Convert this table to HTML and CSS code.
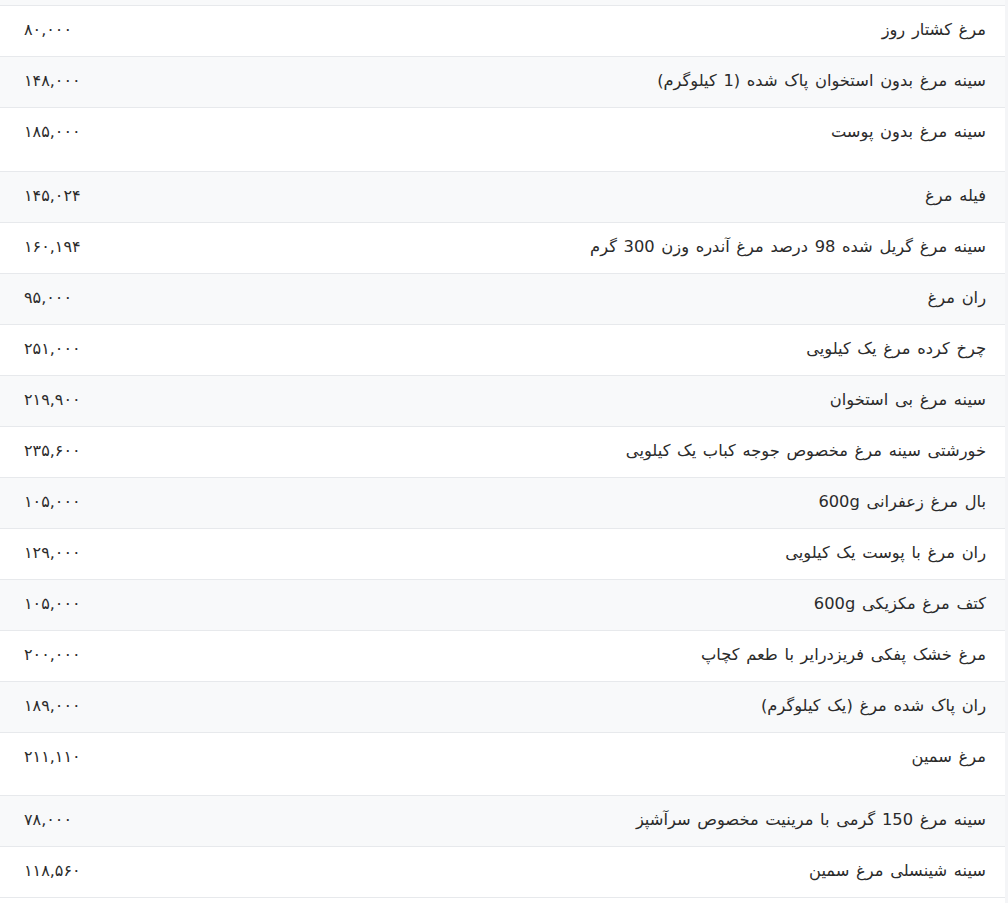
FILE: index.html
```html
<!DOCTYPE html>
<html lang="fa" dir="rtl">
<head>
<meta charset="utf-8">
<title>قیمت مرغ</title>
<link rel="stylesheet" href="styles.css">
</head>
<body>
<div class="page">
  <div class="list">
    <div class="stub"></div>
    <div class="row"><div class="name">مرغ کشتار روز</div><div class="price">۸۰,۰۰۰</div></div>
    <div class="row"><div class="name">سینه مرغ بدون استخوان پاک شده (1 کیلوگرم)</div><div class="price">۱۴۸,۰۰۰</div></div>
    <div class="row tall"><div class="name">سینه مرغ بدون پوست</div><div class="price">۱۸۵,۰۰۰</div></div>
    <div class="row"><div class="name">فیله مرغ</div><div class="price">۱۴۵,۰۲۴</div></div>
    <div class="row"><div class="name">سینه مرغ گریل شده 98 درصد مرغ آندره وزن 300 گرم</div><div class="price">۱۶۰,۱۹۴</div></div>
    <div class="row"><div class="name">ران مرغ</div><div class="price">۹۵,۰۰۰</div></div>
    <div class="row"><div class="name">چرخ کرده مرغ یک کیلویی</div><div class="price">۲۵۱,۰۰۰</div></div>
    <div class="row"><div class="name">سینه مرغ بی استخوان</div><div class="price">۲۱۹,۹۰۰</div></div>
    <div class="row"><div class="name">خورشتی سینه مرغ مخصوص جوجه کباب یک کیلویی</div><div class="price">۲۳۵,۶۰۰</div></div>
    <div class="row"><div class="name">بال مرغ زعفرانی 600g</div><div class="price">۱۰۵,۰۰۰</div></div>
    <div class="row"><div class="name">ران مرغ با پوست یک کیلویی</div><div class="price">۱۲۹,۰۰۰</div></div>
    <div class="row"><div class="name">کتف مرغ مکزیکی 600g</div><div class="price">۱۰۵,۰۰۰</div></div>
    <div class="row"><div class="name">مرغ خشک پفکی فریزدرایر با طعم کچاپ</div><div class="price">۲۰۰,۰۰۰</div></div>
    <div class="row"><div class="name">ران پاک شده مرغ (یک کیلوگرم)</div><div class="price">۱۸۹,۰۰۰</div></div>
    <div class="row tall"><div class="name">مرغ سمین</div><div class="price">۲۱۱,۱۱۰</div></div>
    <div class="row"><div class="name">سینه مرغ 150 گرمی با مرینیت مخصوص سرآشپز</div><div class="price">۷۸,۰۰۰</div></div>
    <div class="row"><div class="name">سینه شینسلی مرغ سمین</div><div class="price">۱۱۸,۵۶۰</div></div>
  </div>
</div>
</body>
</html>
```

FILE: styles.css
```css
html, body {
  margin: 0;
  padding: 0;
  background: #f4f5f7;
}
body {
  font-family: "DejaVu Sans", "Noto Sans", sans-serif;
  color: #2b2b2b;
  font-size: 16px;
}
.page {
  display: flex;
  justify-content: flex-end;
  height: 903px;
  overflow: hidden;
}
.list {
  width: 1005px;
  background: #ffffff;
  display: flex;
  flex-direction: column;
}
.stub {
  height: 5px;
  background: #f8f9fa;
  border-bottom: 1px solid #e7e9ec;
}
.row {
  height: 50px;
  box-sizing: content-box;
  display: flex;
  justify-content: space-between;
  align-items: flex-start;
  border-bottom: 1px solid #e7e9ec;
  line-height: 24px;
  padding: 0;
}
.row:nth-child(odd) {
  background: #f8f9fa;
}
.row.tall {
  height: 62.5px;
}
.name {
  padding: 12px 19px 0 0;
  font-size: 16.3px;
  word-spacing: 1.5px;
}
.price {
  padding: 12px 0 0 24px;
}
```
